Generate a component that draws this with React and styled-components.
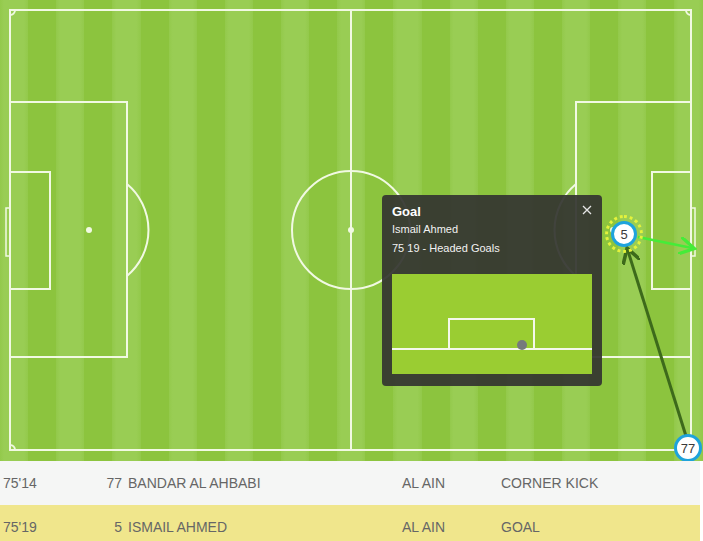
import styled, { createGlobalStyle } from "styled-components";

const GlobalStyle = createGlobalStyle`
  html, body { margin: 0; padding: 0; background: #fff; }
  body { font-family: "Liberation Sans", Arial, sans-serif; overflow: hidden; }
`;

const Page = styled.div`
  width: 703px;
`;

const Pitch = styled.div`
  position: relative;
  width: 703px;
  height: 461px;
  overflow: hidden;
  background: repeating-linear-gradient(
    90deg,
    #93c94b 0px,
    #99cd54 4px,
    #99cd54 24px,
    #93c94b 28.1px,
    #8cc43e 28.1px,
    #8cc43e 56.2px
  );
`;

const Markings = styled.svg`
  display: block;
  position: absolute;
  inset: 0;
`;

const Marker = styled.div`
  position: absolute;
  width: ${(p) => p.$size}px;
  height: ${(p) => p.$size}px;
  margin: -${(p) => p.$size / 2}px 0 0 -${(p) => p.$size / 2}px;
  box-sizing: border-box;
  border-radius: 50%;
  border: 3px solid #1ea3dc;
  background: #fff;
  color: #3a3a3a;
  font-size: 13px;
  display: flex;
  align-items: center;
  justify-content: center;
  z-index: 3;
`;

const Halo = styled.div`
  position: absolute;
  width: 38px;
  height: 38px;
  margin: -19px 0 0 -19px;
  box-sizing: border-box;
  border-radius: 50%;
  border: 3px dotted #e4f23c;
  z-index: 2;
`;

const Popup = styled.div`
  position: absolute;
  left: 382px;
  top: 195px;
  width: 220px;
  height: 191px;
  box-sizing: border-box;
  padding: 9px 10px 12px;
  border-radius: 4px;
  background: rgba(52, 53, 48, 0.93);
  color: #f2f2f2;
  display: flex;
  flex-direction: column;
  z-index: 4;
`;

const PopupTitle = styled.div`
  font-size: 13px;
  font-weight: bold;
  line-height: 15px;
  color: #fff;
`;

const PopupLine = styled.div`
  font-size: 11px;
  line-height: 13px;
  margin-top: ${(p) => p.$gap}px;
`;

const Close = styled.svg`
  position: absolute;
  right: 10px;
  top: 10px;
`;

const Shot = styled.svg`
  display: block;
  margin-top: auto;
`;

const Table = styled.div`
  width: 700px;
`;

const Row = styled.div`
  display: grid;
  grid-template-columns: 90px 32px 280px 99px 1fr;
  height: 44px;
  align-items: center;
  background: ${(p) => (p.$active ? "#f0e68c" : "#f5f6f5")};
  color: #666;
  font-size: 14px;
`;

const Cell = styled.div`
  padding-left: ${(p) => p.$pad || 0}px;
  text-align: ${(p) => (p.$right ? "right" : "left")};
  white-space: nowrap;
`;

const LINE = "#f1f9e3";

const PitchLines = () => (
  <Markings width="703" height="461" viewBox="0 0 703 461" fill="none" stroke={LINE} strokeWidth="2">
    <rect x="10" y="10" width="681" height="440" />
    <line x1="351" y1="10" x2="351" y2="450" />
    <circle cx="351" cy="230" r="59" />
    <circle cx="351" cy="230" r="3" fill={LINE} stroke="none" />
    {/* left end */}
    <rect x="10" y="102" width="117" height="255" />
    <rect x="10" y="172" width="40" height="117" />
    <rect x="6" y="208" width="4" height="48" strokeWidth="1.5" />
    <circle cx="89" cy="230" r="3" fill={LINE} stroke="none" />
    <path d="M127 184 A60 60 0 0 1 127 276" />
    {/* right end */}
    <rect x="576" y="102" width="115" height="255" />
    <rect x="652" y="172" width="39" height="117" />
    <rect x="691" y="208" width="4" height="48" strokeWidth="1.5" />
    <circle cx="613" cy="230" r="3" fill={LINE} stroke="none" />
    <path d="M576 184 A60 60 0 0 0 576 276" />
    {/* corners */}
    <path d="M10 15 A5 5 0 0 0 15 10" />
    <path d="M686 10 A5 5 0 0 0 691 15" />
    <path d="M10 445 A5 5 0 0 1 15 450" />
    <path d="M686 450 A5 5 0 0 1 691 445" />
  </Markings>
);

const Arrows = () => (
  <Markings width="703" height="461" viewBox="0 0 703 461" style={{ zIndex: 1 }}>
    <defs>
      <marker id="headDark" markerWidth="6" markerHeight="6" refX="4" refY="3" orient="auto" markerUnits="strokeWidth">
        <path d="M0 0 L5 3 L0 6" fill="none" stroke="#3d6a1b" strokeWidth="1.2" />
      </marker>
      <marker id="headLight" markerWidth="7" markerHeight="7" refX="5" refY="3.5" orient="auto" markerUnits="strokeWidth">
        <path d="M0 0 L6 3.5 L0 7" fill="none" stroke="#45ec38" strokeWidth="1.3" />
      </marker>
    </defs>
    <line x1="686" y1="436" x2="628" y2="251" stroke="#3d6a1b" strokeWidth="3" markerEnd="url(#headDark)" />
    <line x1="638" y1="237" x2="692" y2="248" stroke="#45ec38" strokeWidth="2.5" markerEnd="url(#headLight)" />
  </Markings>
);

const App = () => {
  return (
    <Page>
      <GlobalStyle />
      <Pitch>
        <PitchLines />
        <Arrows />
        <Halo style={{ left: 624, top: 234 }} />
        <Marker $size={26} style={{ left: 624, top: 234 }}>5</Marker>
        <Marker $size={28} style={{ left: 688, top: 448 }}>77</Marker>
        <Popup>
          <PopupTitle>Goal</PopupTitle>
          <Close width="10" height="10" viewBox="0 0 10 10">
            <path d="M1 1 L9 9 M9 1 L1 9" stroke="#e6e6e6" strokeWidth="1.3" />
          </Close>
          <PopupLine $gap={4}>Ismail Ahmed</PopupLine>
          <PopupLine $gap={6}>75 19 - Headed Goals</PopupLine>
          <Shot width="200" height="100" viewBox="0 0 200 100">
            <rect width="200" height="100" fill="#9acd32" />
            <path d="M0 75 H200 M57 75 V45 H142 V75" fill="none" stroke="#f4f8ea" strokeWidth="2" />
            <circle cx="130" cy="71" r="5" fill="#76797d" />
          </Shot>
        </Popup>
      </Pitch>
      <Table>
        <Row>
          <Cell $pad={3}>75'14</Cell>
          <Cell $right>77</Cell>
          <Cell $pad={6}>BANDAR AL AHBABI</Cell>
          <Cell>AL AIN</Cell>
          <Cell>CORNER KICK</Cell>
        </Row>
        <Row $active>
          <Cell $pad={3}>75'19</Cell>
          <Cell $right>5</Cell>
          <Cell $pad={6}>ISMAIL AHMED</Cell>
          <Cell>AL AIN</Cell>
          <Cell>GOAL</Cell>
        </Row>
      </Table>
    </Page>
  );
};

export default App;
